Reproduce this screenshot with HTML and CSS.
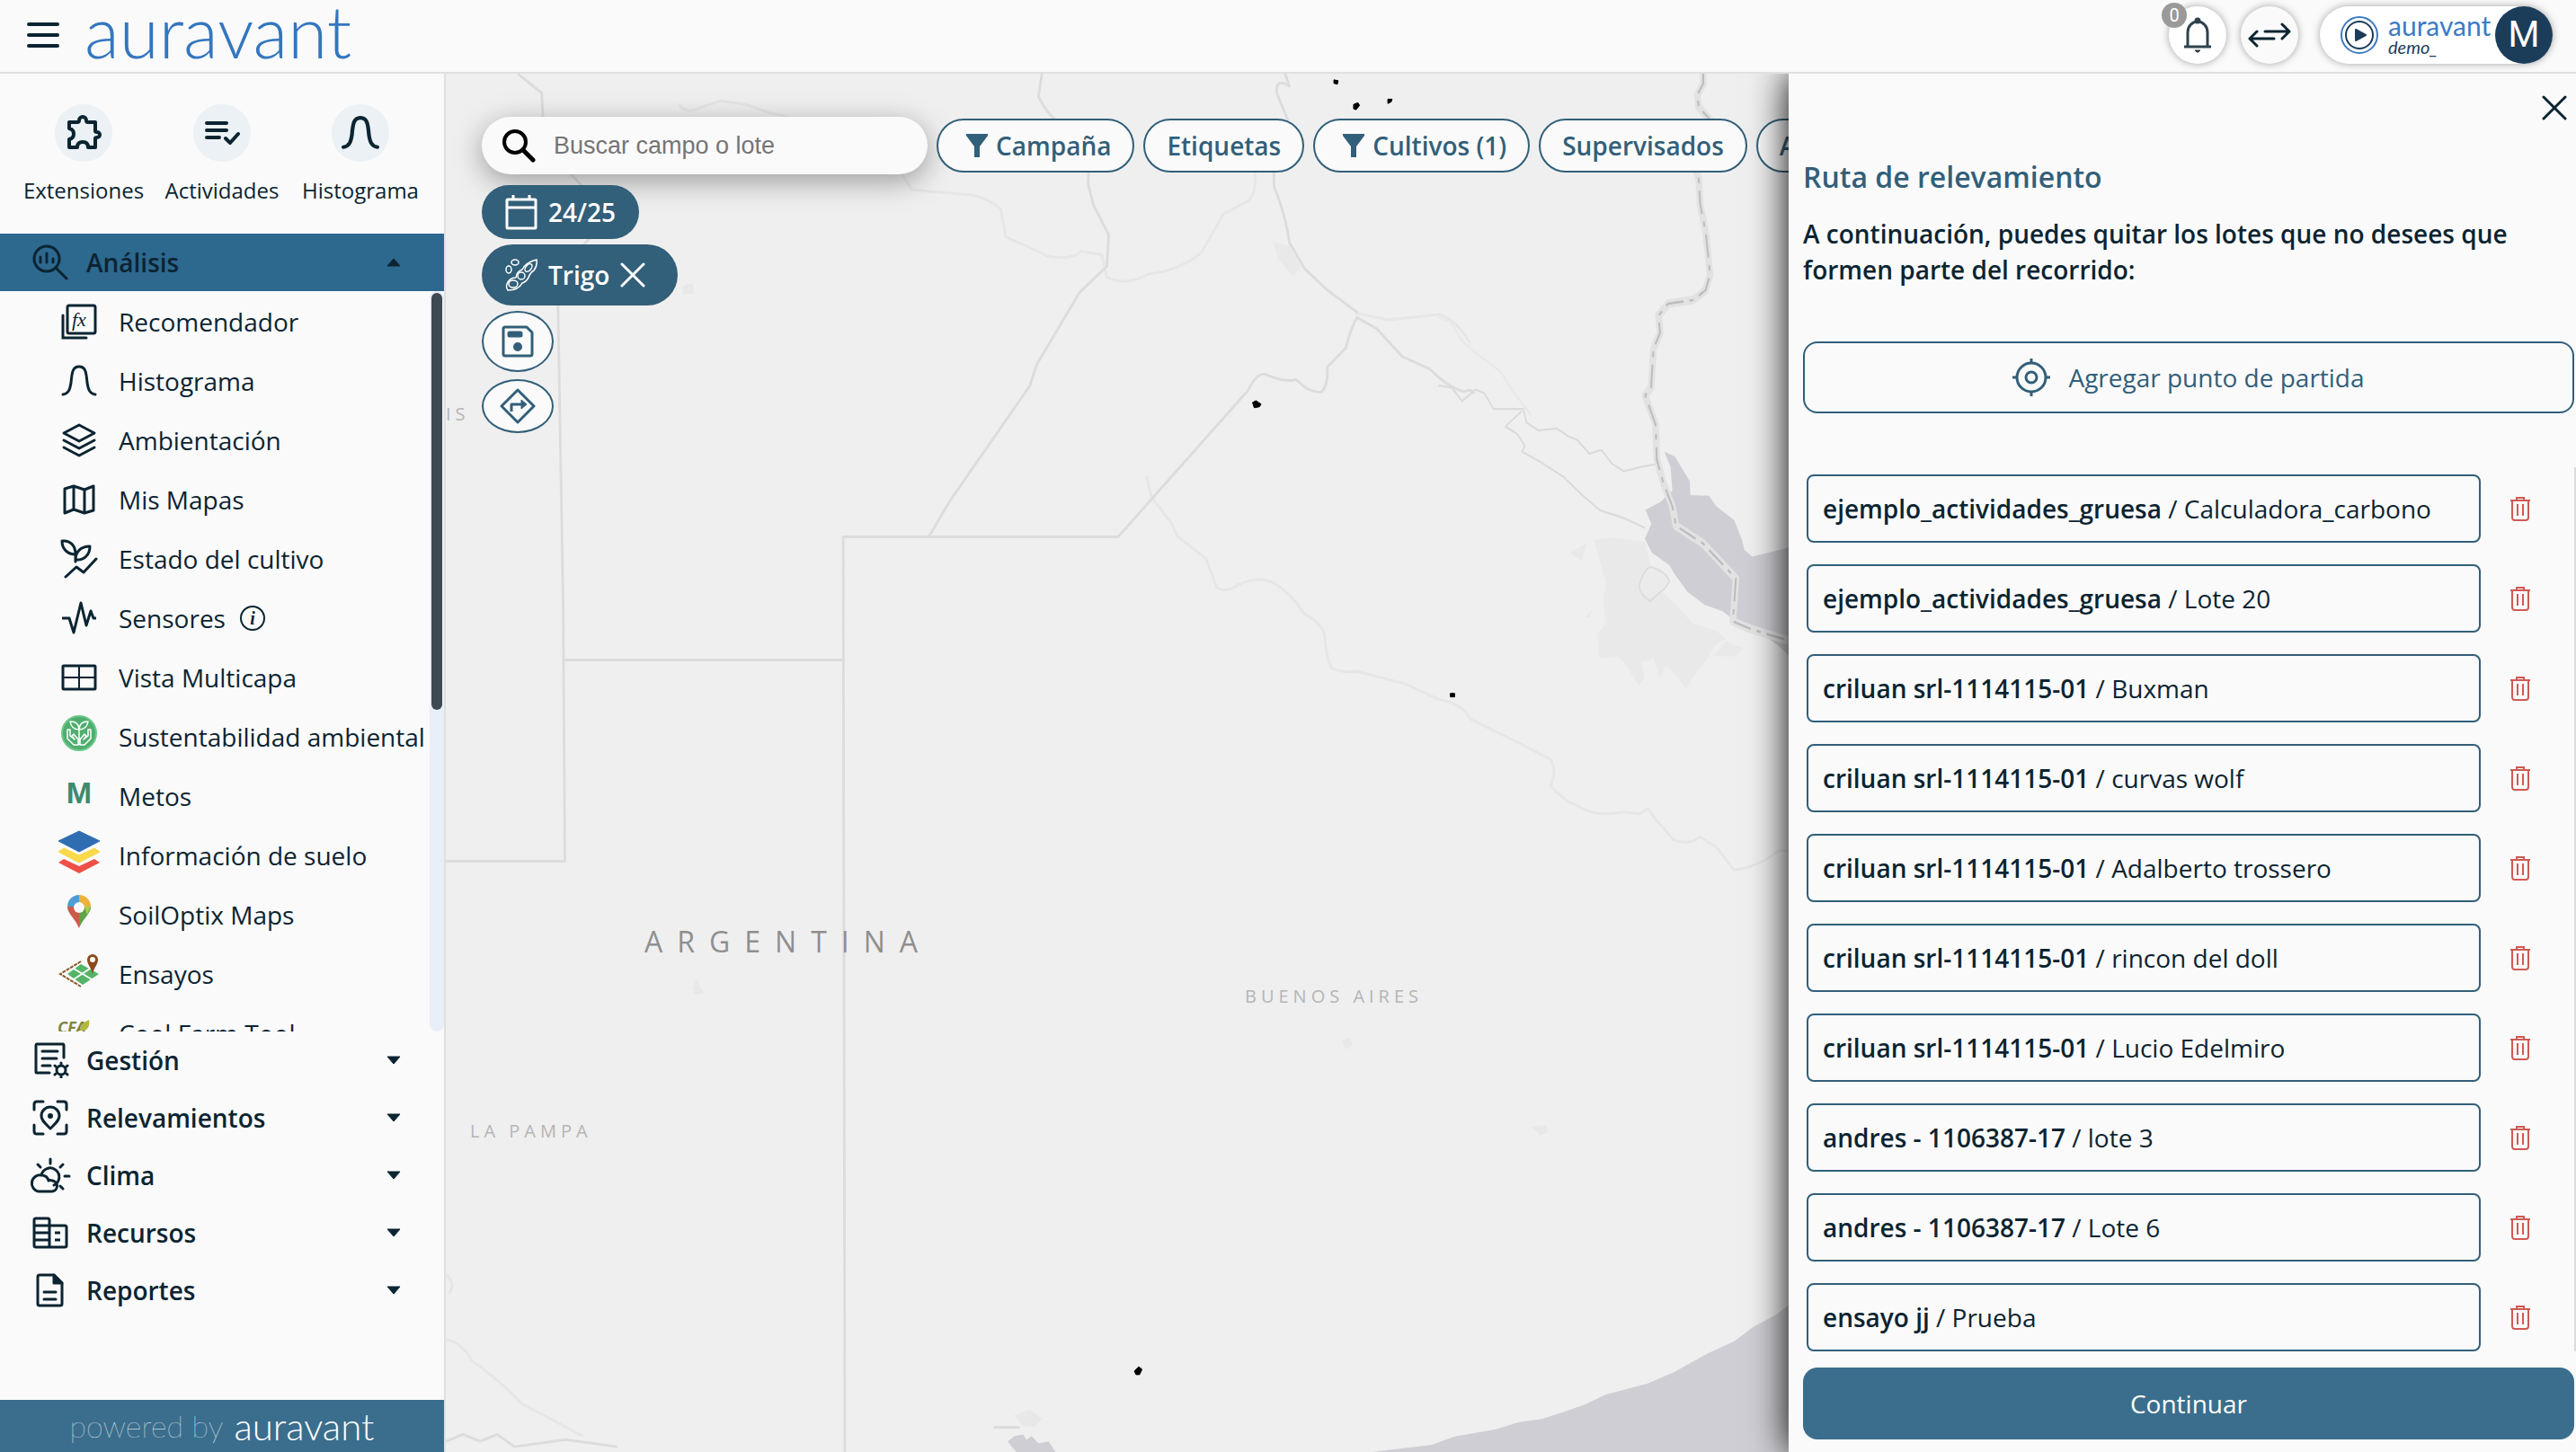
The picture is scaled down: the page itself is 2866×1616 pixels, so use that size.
FILE: index.html
```html
<!DOCTYPE html>
<html lang="es">
<head>
<meta charset="utf-8">
<meta name="viewport" content="width=device-width, initial-scale=1">
<title>Auravant</title>
<link rel="stylesheet" href="styles.css">
</head>
<body>
<svg class="sprite" aria-hidden="true">
  <symbol id="i-trash" viewBox="0 0 24 28"><path d="M1 5h22M8 5V2h8v3M3 5v19a3 3 0 0 0 3 3h12a3 3 0 0 0 3-3V5M9 9v13M15 9v13" fill="none" stroke="currentColor" stroke-width="2"/></symbol>
  <symbol id="i-down" viewBox="0 0 16 10"><path d="M1 1h14L8 9z" fill="currentColor" stroke="currentColor" stroke-linejoin="round"/></symbol>
  <symbol id="i-funnel" viewBox="0 0 26 26"><path d="M1 0h24v2L16 14v12h-6V14L1 2z" fill="currentColor"/></symbol>
  <symbol id="i-close" viewBox="0 0 28 28"><path d="M2 2l24 24M26 2L2 26" fill="none" stroke="currentColor" stroke-width="3" stroke-linecap="round"/></symbol>
  <symbol id="i-bell-curve" viewBox="0 0 40 36"><path d="M2 33C9 32 10 26 11 20C12 8 13 2 20 2S28 8 29 20C30 26 31 32 38 33" fill="none" stroke="currentColor" stroke-linecap="round"/></symbol>
</svg>

<header class="topbar">
  <button class="menu-btn" aria-label="Menú"><svg width="36" height="28" viewBox="0 0 36 28"><path d="M2 2h32M2 14h32M2 26h32" stroke="currentColor" stroke-width="4" stroke-linecap="round"/></svg></button>
  <a class="brand" href="#">auravant</a>
  <div class="top-actions">
    <button class="round bell" aria-label="Notificaciones">
      <svg width="32" height="40" viewBox="0 0 32 40" fill="none" stroke="#2f424d" stroke-width="3"><path d="M1 33h30M5 32V17a11 12 0 0 1 22 0v15" /><circle cx="16" cy="4" r="2" fill="#2f424d"/><path d="M13 37h6l-2 2h-2z" fill="#2f424d" stroke-width="1"/></svg>
      <span class="badge">0</span>
    </button>
    <button class="round" aria-label="Cambiar"><svg width="48" height="28" viewBox="0 0 48 28" fill="none" stroke="currentColor" stroke-width="3" stroke-linecap="round" stroke-linejoin="round"><path d="M19 10h27M38 2l8 8-8 8M29 18H2M10 10l-8 8 8 8"/></svg></button>
    <button class="account">
      <svg width="42" height="42" viewBox="0 0 42 42" fill="none"><circle cx="21" cy="21" r="20" stroke="#3b7bc4" stroke-width="2"/><circle cx="21" cy="21" r="15" stroke="#1c3d5a" stroke-width="2"/><path d="M17 15v12l11-6z" fill="#1c3d5a" stroke="#1c3d5a" stroke-width="2" stroke-linejoin="round"/></svg>
      <span class="account-name"><span class="account-brand">auravant</span><em>demo_</em></span>
      <span class="avatar">M</span>
    </button>
  </div>
</header>

<div class="layout">
  <aside class="sidebar">
    <div class="quick">
      <a href="#"><span class="disc"><svg width="40" height="40" viewBox="0 0 40 40" fill="none" stroke="currentColor" stroke-width="4" stroke-linejoin="round"><path d="M4 8h9q2 0 2-2a4 4 0 0 1 8 0q0 2 2 2h8v10q0 1 2 1a3 3 0 0 1 0 6q-2 0-2 1v10h-8q0-6-6-6t-6 6H4v-9q5-1 5-6t-5-6z"/></svg></span>Extensiones</a>
      <a href="#"><span class="disc"><svg width="40" height="30" viewBox="0 0 40 30" fill="none" stroke="currentColor" stroke-width="4" stroke-linecap="round" stroke-linejoin="round"><path d="M3 4h22M3 12h22M3 20h14M24 21l5 5 9-10"/></svg></span>Actividades</a>
      <a href="#"><span class="disc"><svg width="42" height="38" stroke-width="4"><use href="#i-bell-curve"/></svg></span>Histograma</a>
    </div>
    <nav class="menu">
      <button class="group open"><svg class="gi" width="40" height="40" viewBox="0 0 40 40" fill="none" stroke="currentColor" stroke-width="3" stroke-linecap="round"><circle cx="16" cy="16" r="14"/><path d="M26 26l12 12M9 14v6M16 10v10M23 16v4"/></svg><span>Análisis</span><svg class="arrow up" width="16" height="10"><use href="#i-down"/></svg></button>
      <div class="sub">
        <ul>
          <li><a href="#"><svg width="40" height="40" viewBox="0 0 40 40" fill="none" stroke="currentColor" stroke-width="3" stroke-linecap="round"><rect x="7" y="2" width="31" height="31" rx="2"/><path d="M2 13v25h26"/><text class="fx" x="12" y="25">fx</text></svg>Recomendador</a></li>
          <li><a href="#"><svg width="40" height="36" stroke-width="3"><use href="#i-bell-curve"/></svg>Histograma</a></li>
          <li><a href="#"><svg width="38" height="38" viewBox="0 0 38 38" fill="none" stroke="currentColor" stroke-width="3" stroke-linecap="round" stroke-linejoin="round"><path d="M19 2l17 9-17 9-17-9zM2 19l17 9 17-9M2 27l17 9 17-9"/></svg>Ambientación</a></li>
          <li><a href="#"><svg width="36" height="34" viewBox="0 0 36 34" fill="none" stroke="currentColor" stroke-width="3" stroke-linejoin="round"><path d="M2 5l10-3 12 4 10-4v27l-10 3-12-4-10 4zM12 2v26M24 6v26"/></svg>Mis Mapas</a></li>
          <li><a href="#"><svg width="42" height="44" viewBox="0 0 42 44" fill="none" stroke="currentColor" stroke-width="3" stroke-linecap="round" stroke-linejoin="round"><path d="M2 2c9-1 15 5 15 15C8 17 2 11 2 2zM17 23c0-9 6-15 16-15 0 9-6 16-16 15zM17 17v8M6 42l12-11 8 6L40 22"/></svg>Estado del cultivo</a></li>
          <li><a href="#"><svg width="40" height="38" viewBox="0 0 40 38" fill="none" stroke="currentColor" stroke-width="3" stroke-linejoin="round"><path d="M1 19h8l5 16 8-33 6 25 5-16 3 8h3"/></svg>Sensores<svg class="info" width="28" height="28" viewBox="0 0 28 28"><circle cx="14" cy="14" r="13" fill="none" stroke="currentColor" stroke-width="2"/><text x="14" y="21" text-anchor="middle">i</text></svg></a></li>
          <li><a href="#"><svg width="40" height="30" viewBox="0 0 40 30" fill="none" stroke="currentColor" stroke-width="3"><rect x="2" y="2" width="36" height="26" rx="1"/><path d="M20 2v26M2 15h36" stroke-width="2"/></svg>Vista Multicapa</a></li>
          <li class="ext"><a href="#"><svg width="40" height="40" viewBox="0 0 40 40"><circle cx="20" cy="20" r="19" fill="#4fae6e" stroke="#6cc987" stroke-width="2"/><g fill="none" stroke="#fff" stroke-width="1.500" stroke-linejoin="round"><path d="M20 33V14M20 16c-5 0-9-3-10-9 6 0 10 3 10 9zM20 16c0-6 4-9 10-9-1 6-5 9-10 9z"/><path d="M7 16v10l7 7h5v-6l-5-6-2 2 3 4-5-4V16zM33 16v10l-7 7h-5v-6l5-6 2 2-3 4 5-4V16z"/></g></svg>Sustentabilidad ambiental</a></li>
          <li class="ext"><a href="#"><svg width="40" height="40" viewBox="0 0 40 40"><text class="metos" x="20" y="32" text-anchor="middle">M</text></svg>Metos</a></li>
          <li class="ext"><a href="#"><svg width="48" height="48" viewBox="0 0 48 48" stroke-linejoin="round"><path d="M24 1l23 11-23 12L1 12z" fill="#2f6db3" stroke="#2f6db3"/><path d="M1 24l6-4 17 8 17-8 6 4-23 12z" fill="#f9d949" stroke="#f9d949"/><path d="M1 36l6-4 17 8 17-8 6 4-23 12z" fill="#ee5047"/></svg>Información de suelo</a></li>
          <li class="ext"><a href="#"><svg width="28" height="38" viewBox="0 0 28 38"><path d="M14 1A13 13 0 0 0 1 14l13 1z" fill="#4a9fd0"/><path d="M14 1a13 13 0 0 1 13 13l-13 1z" fill="#eeb13b"/><path d="M1 14c0 8 8 12 13 24V14z" fill="#cb5a4b"/><path d="M27 14c0 8-8 12-13 24V14z" fill="#5da548"/><path d="M20 14l7-1-4 10z" fill="#b5c94a"/><circle cx="14" cy="15" r="6" fill="#fafafa"/></svg>SoilOptix Maps</a></li>
          <li class="ext"><a href="#"><svg width="48" height="40" viewBox="0 0 48 40"><path d="M11 24l15-11 20 11-18 12z" fill="#53b567"/><path d="M18 18l20 12M36 18L18 30" stroke="#fafafa" stroke-width="2"/><path d="M26 10L3 24l23 14" fill="none" stroke="#8b5a2b" stroke-width="2" stroke-dasharray="4 1"/><path d="M39 24c-2-8-6-11-6-16a6 6 0 0 1 12 0c0 5-4 8-6 16z" fill="#8a4a1c"/><circle cx="39" cy="8" r="3" fill="#fafafa"/></svg>Ensayos</a></li>
          <li class="ext"><a href="#"><svg width="48" height="40" viewBox="0 0 48 40"><text class="cfa" x="0" y="24">CFA</text><path d="M25 21q0-8 10-12 2 13-10 12z" fill="#b5b73a"/></svg>Cool Farm Tool</a></li>
        </ul>
        <div class="track" aria-hidden="true"><div class="thumb"></div></div>
      </div>
      <button class="group"><svg class="gi" width="40" height="40" viewBox="0 0 40 40" fill="none" stroke="currentColor" stroke-width="3" stroke-linecap="round" stroke-linejoin="round"><path d="M19 34H5q-1 0-1-1V4q0-2 1-2h29q1 0 1 2v13M11 10h17M11 18h16M11 26h9"/><circle cx="32" cy="31" r="5"/><path d="M32 24v-1M32 38v1M26 27l-1-1M38 35l1 1M26 35l-1 1M38 27l1-1"/></svg><span>Gestión</span><svg class="arrow" width="16" height="10"><use href="#i-down"/></svg></button>
      <button class="group"><svg class="gi" width="40" height="40" viewBox="0 0 40 40" fill="none" stroke="currentColor" stroke-width="3" stroke-linecap="round" stroke-linejoin="round"><path d="M2 11V5q0-3 3-3h7M28 2h7q3 0 3 3v6M38 28v7q0 3-3 3h-7M12 38H5q-3 0-3-3v-7M20 32c-6-6-10-9-10-14a10 10 0 0 1 20 0c0 5-4 8-10 14z"/><circle cx="20" cy="18" r="1.500" fill="currentColor"/></svg><span>Relevamientos</span><svg class="arrow" width="16" height="10"><use href="#i-down"/></svg></button>
      <button class="group"><svg class="gi" width="44" height="40" viewBox="0 0 44 40" fill="none" stroke="currentColor" stroke-width="3" stroke-linecap="round" stroke-linejoin="round"><path d="M9 38h14a6 6 0 0 0 1-12q-2-1-4 0c-1-4-4-6-8-6a9 9 0 0 0-3 18zM12 20a10 10 0 1 1 14 11M22 7V2M11 11L8 8M33 11l3-3M38 21h5M33 32l3 3"/></svg><span>Clima</span><svg class="arrow" width="16" height="10"><use href="#i-down"/></svg></button>
      <button class="group"><svg class="gi" width="40" height="36" viewBox="0 0 40 36" fill="none" stroke="currentColor" stroke-width="3" stroke-linejoin="round"><path d="M19 34V4q0-2-2-2H4q-2 0-2 2v28q0 2 2 2h32q2 0 2-2V12q0-2-2-2H2M2 18h17M2 26h17M25 18h6M25 26h6"/></svg><span>Recursos</span><svg class="arrow" width="16" height="10"><use href="#i-down"/></svg></button>
      <button class="group"><svg class="gi" width="32" height="38" viewBox="0 0 32 38" fill="none" stroke="currentColor" stroke-width="3" stroke-linecap="round" stroke-linejoin="round"><path d="M4 2h16l9 9v23q0 2-2 2H4q-2 0-2-2V4q0-2 2-2zM9 21h13M9 29h13"/><path d="M20 2v9h9z" fill="currentColor"/></svg><span>Reportes</span><svg class="arrow" width="16" height="10"><use href="#i-down"/></svg></button>
    </nav>
    <footer class="powered"><span>powered by</span><strong>auravant</strong></footer>
  </aside>

  <main class="map">
    <svg class="basemap" viewBox="0 0 1494 1534" preserveAspectRatio="xMinYMin slice" role="img" aria-label="Mapa">
      <g transform="scale(.9528 .9783)" fill="none" stroke-linejoin="round">
        <path d="M965 190l20 6 14 24-10 10-16-18z" fill="#e9e9e9"/>
        <path d="M656 1556l8-6 10-2 4 6 6-4 8 8 12-2 8 12h-46z" fill="#cfced4"/>
        <path d="M664 1526l18-6 14 10-8 10-16-2zM288 1040l5-10 4 10 5 6-12 2zM1046 1100l10-3 3 8-8 5zM1268 1198l16-2 4 8-10 4zM276 242l12-4 2 12-12 2z" fill="#e8e8e9"/>
        <g stroke="#e6e6e8" stroke-width="3">
          <path d="M272 35q10 12 24 4l24-8 30 4 30 10 30 6M530 110l14 22q40 4 70 6 20 4 34 16l6 32 20 8 30 14q28 4 38-6l24 4 6 26q24 10 48-4 36-4 62-24l26-44 30-16q10-10 6-40M1062 272l38 8 60-6q20 6 36 32"/>
          <path d="M818 458l6 24 24 30 6 14 34 26 12 32q10 8 24-2 24-12 44-2 18 10 34 34 22 12 24 24 2 26 8 38 14 6 30 4l56 14 40 18q26 4 36 22l54 26q24 12 40 20 8 14 0 30 16 18 34 24 20 12 50 6l20 2 10-6 10 14 20 22q20 6 30-4l20 12 20 26q30-4 52-22h18M0 1440q20 4 30 24 30 20 60 50 40 20 70 36M0 1366q12 10 4 22"/>
        </g>
        <g stroke="#dcdcdd" stroke-width="3">
          <path d="M84 0l28 22 3 60 58 60 8 34-18 16-32 72 6 340 2 292H0M138 667h327M564 527h-100l2 1041M464 527h321l152-167q10-20 20-18 24 10 36 6 16 16 30 14 8-10 6-28l22-22q6-24 14-36M564 527l24-40 94-132 8-24 50-82 32-30 2-36-18-34-6-24 2-40M696 0l-4 26q10 20 24 30"/>
        </g>
        <path d="M1065 272l-36-26-26-24-18-30q-4-30-18-64V90l16-38-12-28q-4-20 14-10L980 0M1065 278l22 12 30 32 32 14q20 20 40 26 8-4 12 2M0 1556l20-8 20 8 20-8 20 14 60-8 60 8M640 1540h30" stroke="#dcdcde" stroke-width="3"/>
        <path d="M1037 7l5 1-1 4-4-1zM1060 35l5-2 2 3-4 5-3-1zM1100 29l5 0-1 3-4 2zM942 374l4-2 6 4-2 3-6 1zM1173 705h5v4h-5zM804 1476l5-5 4 3-3 6h-4z" fill="#000" stroke="#000" stroke-width="1"/>
      </g>
      <g transform="translate(1104 -2) scale(.3333 .4337)" fill="none" stroke-linejoin="round">
        <path d="M440 1235l55-25-15 45zM520 1200l60-5 110 10 20 60-10 40 80 50 70 60 80 20 30 20-40 20-20 30-60 60-10 20-50-50-20-10-20 30-20-50-40 10 10 40-20 20-50-60-20-15-60 5-10-60 30-30-10-60 10-45zM490 1400l25-20-10 20zM920 1500l40-40 60 20-30 20z" fill="#e9e9e9"/>
        <path d="M755 975l35 12 50 63 2 36 62 2 24 26 60 36 28 54 6 22 26 18 128-24v282l-38-28-46-26-60-34-40-4-42-26-60-16-58-34-40-42-20-26-58-32-24-36 22-38-20-36 50-20 40-30-6-60z" fill="#cfced4"/>
        <path d="M708 1270q50 10 64 36-10 20-36 32l-28 20q-36-16-36-40 10-36 36-48z" fill="#ebebeb" stroke="#dcdcdc" stroke-width="5"/>
        <path d="M0 805l45 5 35 35 45-30 30 10 30 40 100 0 10 35 40 20 60-5 40 20 30 10 40 35 40-10 35 35 40 20 60-12 60-8M280 870l-55 40 40 20 25 30-10 15 60 25 80 40 60 45 60 40 80 20 70 25" stroke="#dadadd" stroke-width="5"/>
        <path d="M0 630l40 10 40 50 60 40 70 40 40 50 60 60" stroke="#e8e8ea" stroke-width="5"/>
        <path d="M885 0v30l-20 30 5 30 38 33-10 60-38 67 10 25 5 65 18 70 15 110-15 40-40 25-85 10-32 30 5 45-22 40-8 100-20 20 35 75 4 90 22 60 30 60 12 50 90 45 110 90-10 110 60 20 130 30" stroke="#e2e2e2" stroke-width="22"/>
        <path d="M885 0v30l-20 30 5 30 38 33-10 60-38 67 10 25 5 65 18 70 15 110-15 40-40 25-85 10-32 30 5 45-22 40-8 100-20 20 35 75 4 90 22 60 30 60 12 50 90 45 110 90-10 110 60 20 130 30" stroke="#bdbdbf" stroke-width="6" stroke-dasharray="60 20 14 20"/>
      </g>
      <path transform="translate(704 1118) scale(.5102 .3333)" d="M640 1248l130-24 50-28 90-24 50-24 50-10 40-20 50-26 50-36 90-36 60-40 70-60 60-42 40-46 52-44 26-30v490z" fill="#cfced4"/>
      <text class="country" x="221" y="978">ARGENTINA</text>
      <text class="province" x="889" y="1034">BUENOS AIRES</text>
      <text class="province" x="27" y="1184">LA PAMPA</text>
      <text class="province" x="0" y="386">IS</text>
    </svg>

    <div class="controls">
      <div class="filters">
        <label class="search"><svg width="38" height="38" viewBox="0 0 38 38" fill="none" stroke="#000"><circle cx="15" cy="15" r="12" stroke-width="4"/><path d="M24 24l11 11" stroke-width="5" stroke-linecap="round"/></svg><input type="text" placeholder="Buscar campo o lote" aria-label="Buscar campo o lote"></label>
        <button class="pill icon"><svg width="26" height="26"><use href="#i-funnel"/></svg>Campaña</button>
        <button class="pill">Etiquetas</button>
        <button class="pill icon"><svg width="26" height="26"><use href="#i-funnel"/></svg>Cultivos (1)</button>
        <button class="pill">Supervisados</button>
        <button class="pill more">A</button>
      </div>
      <div class="chips">
        <button class="chip"><svg width="36" height="40" viewBox="0 0 36 40" fill="none" stroke="currentColor" stroke-width="3" stroke-linejoin="round"><rect x="2" y="6" width="32" height="32" rx="1"/><path d="M2 15h32M9 6V1M27 6V1"/></svg>24/25</button>
        <button class="chip tall"><svg width="36" height="36" viewBox="0 0 36 36" fill="none" stroke="currentColor" stroke-width="1.500"><path d="M35 1q1 7-3 12-4 2-6 8-3 5-7 6-4 8-16 8-3-4 0-9 3-5 9-5 1-7 7-9 4-8 16-11z"/><ellipse cx="26" cy="10" rx="3" ry="5" transform="rotate(40 26 10)"/><circle cx="18" cy="19" r="4"/><ellipse cx="9" cy="28" rx="5" ry="4"/><ellipse cx="11" cy="4" rx="4" ry="3"/><ellipse cx="4" cy="12" rx="3" ry="4"/></svg>Trigo<svg width="28" height="28"><use href="#i-close"/></svg></button>
        <button class="oval tall" aria-label="Guardar"><svg width="36" height="36" viewBox="0 0 36 36" fill="none" stroke="currentColor" stroke-width="3" stroke-linejoin="round"><path d="M4 2h24l6 6v24q0 2-2 2H4q-2 0-2-2V4q0-2 2-2z"/><rect x="8" y="8" width="14" height="4" rx="1" fill="currentColor"/><circle cx="18" cy="24" r="3.500" fill="currentColor"/></svg></button>
        <button class="oval" aria-label="Ruta"><svg width="40" height="40" viewBox="0 0 40 40" fill="none" stroke="currentColor" stroke-width="3" stroke-linejoin="round"><path d="M20 2l18 18-18 18L2 20z"/><path d="M13 26v-8h12"/><path d="M24 13l6 5-6 5z" fill="currentColor" stroke-width="1"/></svg></button>
      </div>
    </div>
  </main>

  <section class="panel">
    <button class="close" aria-label="Cerrar"><svg width="28" height="28"><use href="#i-close"/></svg></button>
    <h1>Ruta de relevamiento</h1>
    <p>A continuación, puedes quitar los lotes que no desees que formen parte del recorrido:</p>
    <button class="start"><svg width="42" height="42" viewBox="0 0 42 42" fill="none" stroke="currentColor" stroke-width="3"><circle cx="21" cy="21" r="16"/><circle cx="21" cy="21" r="6"/><path d="M21 0v5M21 37v5M0 21h5M37 21h5"/></svg>Agregar punto de partida</button>
    <ul class="lots">
      <li><div class="lot"><b>ejemplo_actividades_gruesa</b> / Calculadora_carbono</div><button aria-label="Quitar"><svg width="24" height="28"><use href="#i-trash"/></svg></button></li>
      <li><div class="lot"><b>ejemplo_actividades_gruesa</b> / Lote 20</div><button aria-label="Quitar"><svg width="24" height="28"><use href="#i-trash"/></svg></button></li>
      <li><div class="lot"><b>criluan srl-1114115-01</b> / Buxman</div><button aria-label="Quitar"><svg width="24" height="28"><use href="#i-trash"/></svg></button></li>
      <li><div class="lot"><b>criluan srl-1114115-01</b> / curvas wolf</div><button aria-label="Quitar"><svg width="24" height="28"><use href="#i-trash"/></svg></button></li>
      <li><div class="lot"><b>criluan srl-1114115-01</b> / Adalberto trossero</div><button aria-label="Quitar"><svg width="24" height="28"><use href="#i-trash"/></svg></button></li>
      <li><div class="lot"><b>criluan srl-1114115-01</b> / rincon del doll</div><button aria-label="Quitar"><svg width="24" height="28"><use href="#i-trash"/></svg></button></li>
      <li><div class="lot"><b>criluan srl-1114115-01</b> / Lucio Edelmiro</div><button aria-label="Quitar"><svg width="24" height="28"><use href="#i-trash"/></svg></button></li>
      <li><div class="lot"><b>andres - 1106387-17</b> / lote 3</div><button aria-label="Quitar"><svg width="24" height="28"><use href="#i-trash"/></svg></button></li>
      <li><div class="lot"><b>andres - 1106387-17</b> / Lote 6</div><button aria-label="Quitar"><svg width="24" height="28"><use href="#i-trash"/></svg></button></li>
      <li><div class="lot"><b>ensayo jj</b> / Prueba</div><button aria-label="Quitar"><svg width="24" height="28"><use href="#i-trash"/></svg></button></li>
    </ul>
    <button class="continue">Continuar</button>
  </section>
</div>
</body>
</html>
```
FILE: styles.css
```css
* { box-sizing: border-box; }
body {
  margin: 0;
  height: 100vh;
  display: flex;
  flex-direction: column;
  overflow: hidden;
  font-family: "Open Sans", "Noto Sans", sans-serif;
  font-size: 28px;
  line-height: 40px;
  color: #0b2431;
  background: #fafafa;
}
button {
  font: inherit;
  color: inherit;
  background: none;
  border: 0;
  padding: 0;
  margin: 0;
  cursor: pointer;
}
a { color: inherit; text-decoration: none; }
ul { list-style: none; margin: 0; padding: 0; }
svg { display: block; flex: none; }
.sprite { position: absolute; width: 0; height: 0; }

/* Top bar */
.topbar {
  flex: none;
  height: 82px;
  display: flex;
  align-items: center;
  padding: 0 26px 2px 30px;
  border-bottom: 2px solid #e0e0e0;
  background: #fafafa;
}
.brand {
  margin-left: 28px;
  font-family: Lato, sans-serif;
  font-size: 80px;
  line-height: 80px;
  font-weight: 300;
  padding-bottom: 10px;
  color: #3376bf;
}
.top-actions {
  margin-left: auto;
  display: flex;
  align-items: center;
}
.round {
  position: relative;
  width: 64px;
  height: 64px;
  margin-right: 16px;
  display: grid;
  place-items: center;
  border-radius: 50%;
  background: #fafafa;
  box-shadow: 0 0 8px rgba(0, 0, 0, .35);
}
.bell { background: #fff; }
.badge {
  position: absolute;
  left: -8px;
  top: -4px;
  width: 28px;
  height: 28px;
  border-radius: 50%;
  background: #9a9a9a;
  color: #fff;
  font-family: Roboto, sans-serif;
  font-size: 20px;
  line-height: 28px;
  text-align: center;
}
.account {
  margin-left: 8px;
  height: 64px;
  display: flex;
  align-items: center;
  padding-left: 23px;
  border-radius: 32px;
  background: #fff;
  box-shadow: 0 0 8px rgba(0, 0, 0, .35);
}
.account-name {
  width: 119px;
  margin-left: 11px;
  display: flex;
  flex-direction: column;
  align-items: flex-start;
  font-family: Lato, sans-serif;
  font-size: 20px;
  line-height: 22px;
  color: #1c3d5a;
}
.account-brand { font-size: 30px; line-height: 26px; color: #3b7bc4; }
.avatar {
  width: 64px;
  height: 64px;
  border-radius: 50%;
  background: #1c3d5a;
  color: #fff;
  font-family: Roboto, sans-serif;
  font-size: 40px;
  line-height: 64px;
  text-align: center;
}

.layout {
  flex: 1;
  min-height: 0;
  display: grid;
  grid-template-columns: 496px minmax(0, 1fr) 876px;
}

/* Sidebar */
.sidebar {
  display: flex;
  flex-direction: column;
  min-height: 0;
  border-right: 2px solid #e0e0e0;
}
.quick {
  display: grid;
  grid-template-columns: repeat(3, 154px);
  justify-content: center;
  padding: 34px 0 32px;
}
.quick a {
  display: flex;
  flex-direction: column;
  align-items: center;
  gap: 16px;
  font-size: 24px;
  line-height: 32px;
}
.disc {
  width: 64px;
  height: 64px;
  display: grid;
  place-items: center;
  border-radius: 50%;
  background: #ebf1f4;
}
.group {
  width: 100%;
  height: 64px;
  display: flex;
  align-items: center;
  padding-right: 48px;
  font-weight: 600;
  text-align: left;
}
.group.open { background: #2d688f; }
.gi { width: 96px; padding-left: 16px; }
.arrow { margin-left: auto; }
.arrow.up { transform: rotate(180deg); }
.sub {
  height: 51vh;
  display: flex;
  overflow: hidden;
}
.sub ul { flex: 1; min-width: 0; padding-top: 1px; }
.sub li a {
  height: 66px;
  display: flex;
  align-items: center;
  white-space: nowrap;
}
.sub a > svg:first-child { width: 88px; margin-left: 44px; }
.sub .ext a > svg:first-child { margin-bottom: 8px; }
.fx { font: italic 22px "Liberation Serif", serif; fill: currentColor; stroke: none; }
.info { margin-left: 16px; }
.info text { font: italic bold 20px "Liberation Serif", serif; fill: currentColor; }
.metos { font: bold 34px "Liberation Sans", sans-serif; fill: #3f896d; }
.cfa { font: italic bold 18px "Open Sans", sans-serif; fill: #7d8640; }
.track {
  flex: none;
  width: 16px;
  padding: 2px;
  border-radius: 8px;
  background: #e9eff8;
}
.thumb { height: 464px; border-radius: 6px; background: #3f4952; }
.powered {
  margin-top: auto;
  height: 58px;
  display: flex;
  justify-content: center;
  align-items: center;
  gap: 12px;
  background: #3b6e8d;
  color: #fff;
  font-family: Lato, sans-serif;
  font-size: 42px;
  line-height: 56px;
}
.powered span { font-size: 34px; font-weight: 100; }
.powered strong { font-weight: 300; }

/* Map */
.map { position: relative; overflow: hidden; background: #efefef; }
.basemap { position: absolute; inset: 0; width: 100%; height: 100%; }
.country { font-size: 32px; letter-spacing: 16px; fill: #8f8f8f; }
.province { font-size: 20px; letter-spacing: 5px; fill: #b5b5b5; }
.controls { position: relative; padding: 48px 0 0 40px; }
.filters { display: flex; align-items: center; gap: 10px; }
.search {
  flex: none;
  width: 496px;
  height: 64px;
  display: flex;
  align-items: center;
  gap: 20px;
  padding: 0 22px;
  border-radius: 32px;
  background: #fafafa;
  box-shadow: 0 8px 32px rgba(0, 0, 0, .35);
}
.search input {
  flex: 1;
  min-width: 0;
  border: 0;
  padding: 0;
  background: none;
  outline: 0;
  font: 27px "Liberation Sans", sans-serif;
}
.search input::placeholder { color: #757575; opacity: 1; }
.pill {
  position: relative;
  flex: none;
  height: 60px;
  display: flex;
  align-items: center;
  gap: 8px;
  padding: 0 24px;
  border: 2px solid #325f79;
  border-radius: 30px;
  background: #fafafa;
  color: #325f79;
  font-weight: 600;
}
.pill.icon { padding-left: 30px; }
.pill.more { width: 160px; }
.chips {
  position: relative;
  display: flex;
  flex-direction: column;
  align-items: flex-start;
  gap: 6px;
  padding-top: 12px;
}
.chip {
  height: 60px;
  display: flex;
  align-items: center;
  gap: 12px;
  padding: 0 26px;
  border-radius: 34px;
  background: #325f79;
  color: #fff;
  font-weight: 600;
}
.chip.tall { padding-right: 36px; }
.oval {
  width: 80px;
  height: 60px;
  display: grid;
  place-items: center;
  border: 2px solid #325f79;
  border-radius: 50%;
  background: #fafafa;
  color: #325f79;
}
.tall { height: 68px; }
.oval.tall { margin-bottom: 2px; }

/* Route panel */
.panel {
  position: relative;
  min-height: 0;
  display: flex;
  flex-direction: column;
  padding: 24px 2px 14px 16px;
  background: #fafafa;
  box-shadow: 0 0 40px #000;
  clip-path: inset(0 0 0 -60px);
}
.close { align-self: flex-end; margin-right: 8px; }
.panel h1 {
  margin: 41px 0 0;
  font-size: 32px;
  line-height: 44px;
  font-weight: 600;
  color: #325f79;
}
.panel p { margin: 21px 60px 60px 0; font-weight: 600; }
.start, .continue {
  flex: none;
  height: 80px;
  display: flex;
  justify-content: center;
  align-items: center;
  gap: 20px;
  border-radius: 16px;
}
.start { border: 2px solid #325f79; color: #325f79; }
.lots {
  flex: 1;
  min-height: 0;
  margin: 60px -2px 18px 0;
  padding: 8px 16px 0 4px;
  overflow: hidden;
  border-right: 2px solid #dcdcdc;
}
.lots li { display: flex; margin-bottom: 24px; }
.lot {
  flex: 1;
  height: 76px;
  padding: 16px;
  border: 2px solid #325f79;
  border-radius: 8px;
  white-space: nowrap;
}
.lot b { font-weight: 600; }
.lots button {
  width: 88px;
  display: grid;
  place-items: center;
  color: #cf5a54;
}
.continue { background: #3b6e8d; color: #fff; }
```
